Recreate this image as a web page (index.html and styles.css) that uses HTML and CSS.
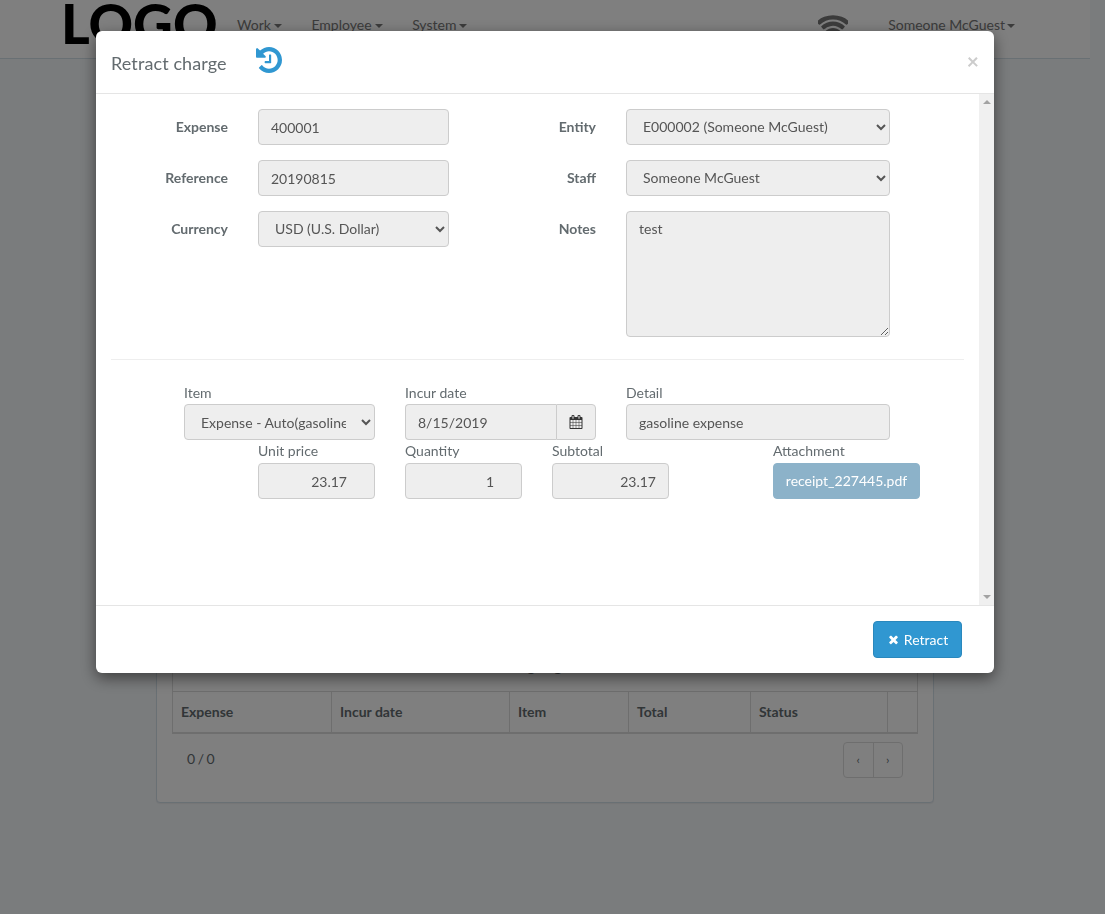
FILE: index.html
```html
<!DOCTYPE html>
<html lang="en">
<head>
  <meta charset="UTF-8"/>
  <title>Retract charge</title>
  <link rel="stylesheet" href="styles.css">
</head>
<body>
<header class="navbar">
  <div class="logo">LOGO</div>
  <nav class="nav-links">
    <a>Work<span class="caret"></span></a>
    <a>Employee<span class="caret"></span></a>
    <a>System<span class="caret"></span></a>
  </nav>
  <div class="nav-right">
    <svg class="wifi-icon" viewBox="0 0 1792 1792"><path d="M896 1523q-20 0-93-73.5t-73-93.5q0-32 62.5-54t103.5-22 103.5 22 62.5 54q0 20-73 93.5t-93 73.5zm270-271q-2 0-40-25t-101.5-50-128.5-25-128.5 25-101 50-40.5 25q-18 0-93.5-75t-75.5-93q0-13 10-23 78-77 196-121t233-44 233 44 196 121q10 10 10 23 0 18-75.5 93t-93.5 75zm273-272q-11 0-23-8-136-105-252-154.5t-268-49.5q-85 0-170.5 22t-149 53-113.5 62-79 53-31 22q-17 0-92-75t-75-93q0-12 10-22 132-132 320-205t380-73 380 73 320 205q10 10 10 22 0 18-75 93t-92 75zm271-271q-11 0-22-9-179-157-371.5-236.5t-420.5-79.5-420.5 79.5-371.5 236.5q-11 9-22 9-17 0-92.5-75t-75.5-93q0-13 10-23 187-186 445-288t527-102 527 102 445 288q10 10 10 23 0 18-75.5 93t-92.5 75z"/></svg>
    <a>Someone McGuest<span class="caret"></span></a>
  </div>
</header>

<main>
  <section class="panel">
    <div class="table-title">Ongoing</div>
    <table class="charge-table">
      <thead>
        <tr>
          <th class="col-expense">Expense</th>
          <th class="col-date">Incur date</th>
          <th class="col-item">Item</th>
          <th class="col-total">Total</th>
          <th class="col-status">Status</th>
          <th></th>
        </tr>
      </thead>
    </table>
    <div class="table-footer">
      <span class="page-count">0 / 0</span>
      <div class="pager">
        <span>‹</span>
        <span>›</span>
      </div>
    </div>
  </section>
</main>

<!-- Retract charge dialog -->
<div class="modal-overlay">
  <div class="modal">
    <div class="modal-header">
      <h4>Retract charge</h4>
      <svg class="history-icon" viewBox="128 128 1536 1536"><path d="M1664 896q0 156-61 298t-164 245-245 164-298 61q-172 0-327-72.5t-264-204.5q-7-10-6.5-22.5t8.5-20.5l137-138q10-9 25-9 16 2 23 12 73 95 179 147t225 52q104 0 198.5-40.5t163.5-109.5 109.5-163.5 40.5-198.5-40.5-198.5-109.5-163.5-163.5-109.5-198.5-40.5q-98 0-188 35.5t-160 101.5l137 138q31 30 14 69-17 40-59 40h-448q-26 0-45-19t-19-45v-448q0-42 40-59 39-17 69 14l130 129q107-101 244.5-156.5t284.5-55.5q156 0 298 61t245 164 164 245 61 298zm-640-288v448q0 14-9 23t-23 9h-320q-14 0-23-9t-9-23v-64q0-14 9-23t23-9h224v-352q0-14 9-23t23-9h64q14 0 23 9t9 23z"/></svg>
      <button class="modal-close">×</button>
    </div>

    <div class="modal-middle">
      <div class="modal-body">
        <div class="form-top">
          <div class="form-col form-col-left">
            <div class="form-row">
              <label>Expense</label>
              <input class="form-control" value="400001" disabled>
            </div>
            <div class="form-row">
              <label>Reference</label>
              <input class="form-control" value="20190815" disabled>
            </div>
            <div class="form-row">
              <label>Currency</label>
              <select class="form-control">
                <option>USD (U.S. Dollar)</option>
              </select>
            </div>
          </div>
          <div class="form-col form-col-right">
            <div class="form-row">
              <label>Entity</label>
              <select class="form-control">
                <option>E000002 (Someone McGuest)</option>
              </select>
            </div>
            <div class="form-row">
              <label>Staff</label>
              <select class="form-control">
                <option>Someone McGuest</option>
              </select>
            </div>
            <div class="form-row">
              <label>Notes</label>
              <textarea class="form-control notes" disabled>test</textarea>
            </div>
          </div>
        </div>

        <hr>

        <div class="line-row line-row-first">
          <div class="field field-wide">
            <label>Item</label>
            <select class="form-control">
              <option>Expense - Auto(gasoline)</option>
            </select>
          </div>
          <div class="field field-wide">
            <label>Incur date</label>
            <div class="input-group">
              <input class="form-control" value="8/15/2019" disabled>
              <span class="input-addon">
                <svg class="calendar-icon" viewBox="0 0 1792 1792"><path d="M192 1664h288v-288h-288v288zm352 0h320v-288h-320v288zm-352-352h288v-320h-288v320zm352 0h320v-320h-320v320zm-352-384h288v-288h-288v288zm736 736h320v-288h-320v288zm-384-736h320v-288h-320v288zm768 736h288v-288h-288v288zm-384-352h320v-320h-320v320zm-352-864v-288q0-13-9.5-22.5t-22.5-9.5h-64q-13 0-22.5 9.5t-9.5 22.5v288q0 13 9.5 22.5t22.5 9.5h64q13 0 22.5-9.5t9.5-22.5zm736 864h288v-320h-288v320zm-384-384h320v-288h-320v288zm384 0h288v-288h-288v288zm32-480v-288q0-13-9.5-22.5t-22.5-9.5h-64q-13 0-22.5 9.5t-9.5 22.5v288q0 13 9.5 22.5t22.5 9.5h64q13 0 22.5-9.5t9.5-22.5zm384-64v1280q0 52-38 90t-90 38h-1408q-52 0-90-38t-38-90v-1280q0-52 38-90t90-38h128v-96q0-66 47-113t113-47h64q66 0 113 47t47 113v96h384v-96q0-66 47-113t113-47h64q66 0 113 47t47 113v96h128q52 0 90 38t38 90z"/></svg>
              </span>
            </div>
          </div>
          <div class="field field-detail">
            <label>Detail</label>
            <input class="form-control" value="gasoline expense" disabled>
          </div>
        </div>

        <div class="line-row line-row-second">
          <div class="field field-num">
            <label>Unit price</label>
            <input class="form-control num num-spin" value="23.17" disabled>
          </div>
          <div class="field field-num">
            <label>Quantity</label>
            <input class="form-control num num-spin" value="1" disabled>
          </div>
          <div class="field field-num">
            <label>Subtotal</label>
            <input class="form-control num" value="23.17" disabled>
          </div>
          <div class="field field-attach">
            <label>Attachment</label>
            <a class="attach-btn">receipt_227445.pdf</a>
          </div>
        </div>
      </div>

      <!-- scrollbar with nothing to scroll -->
      <div class="scroll-track">
        <span class="arrow-up"></span>
        <span class="arrow-down"></span>
      </div>
    </div>

    <div class="modal-footer">
      <button class="btn-retract">
        <svg class="times-icon" viewBox="0 0 1792 1792"><path d="M1490 1322q0 40-28 68l-136 136q-28 28-68 28t-68-28l-294-294-294 294q-28 28-68 28t-68-28l-136-136q-28-28-28-68t28-68l294-294-294-294q-28-28-28-68t28-68l136-136q28-28 68-28t68 28l294 294 294-294q28-28 68-28t68 28l136 136q28 28 28 68t-28 68l-294 294 294 294q28 28 28 68z"/></svg>
        Retract
      </button>
    </div>
  </div>
</div>
</body>
</html>
```

FILE: styles.css
```css
* {
  box-sizing: border-box;
}
html, body {
  height: 100%;
}
body {
  margin: 0;
  padding-right: 15px;
  overflow: hidden;
  font-family: Lato, "Open Sans", sans-serif;
  font-size: 14px;
  line-height: 20px;
  color: #636b6f;
  background-color: #f5f8fa;
}

/* page under the dialog */
.navbar {
  display: flex;
  align-items: center;
  height: 59px;
  padding: 0 75px 0 65px;
  background-color: #fff;
  border-bottom: 1px solid #d3e0e9;
  overflow: hidden;
  color: #777;
}
.logo {
  width: 172px;
  margin: -12px 0 0 -4px;
  font-size: 55px;
  line-height: 58px;
  font-weight: 900;
  color: #000;
}
.nav-links {
  display: flex;
  gap: 29.6px;
  margin: -9px 0 0 4px;
}
.caret {
  display: inline-block;
  margin-left: 3px;
  vertical-align: middle;
  border-top: 4px solid;
  border-left: 4px solid transparent;
  border-right: 4px solid transparent;
}
.nav-right {
  display: flex;
  align-items: center;
  gap: 40px;
  margin-left: auto;
  margin-top: -9px;
}
.nav-right .caret {
  margin-left: 2px;
}
.wifi-icon {
  width: 30px;
  height: 30px;
  margin-top: 6px;
  fill: #777;
}

.panel {
  width: 778px;
  height: 174px;
  margin: 570px 0 0 156px;
  padding: 15px;
  background-color: #fff;
  border: 1px solid #d3e0e9;
  border-radius: 4px;
  box-shadow: 0 1px 1px rgba(0,0,0,0.05);
}
.table-title {
  height: 46px;
  padding: 11px 20px 0 0;
  text-align: center;
  font-weight: bold;
  border: 1px solid #ddd;
  border-bottom: none;
}
.charge-table {
  width: 746px;
  border-collapse: collapse;
  table-layout: fixed;
}
.charge-table th {
  height: 41px;
  padding: 0 8px;
  text-align: left;
  border: 1px solid #ddd;
  border-bottom-width: 2px;
}
.col-expense { width: 159px; }
.col-date { width: 178px; }
.col-item { width: 119px; }
.col-total { width: 122px; }
.col-status { width: 137px; }
.table-footer {
  display: flex;
  justify-content: space-between;
  padding: 8px 15px 0;
}
.page-count {
  margin-top: 7px;
  word-spacing: -1px;
}
.pager {
  display: flex;
  width: 60px;
  height: 36px;
  border: 1px solid #ddd;
  border-radius: 4px;
}
.pager span {
  flex: 1;
  text-align: center;
  line-height: 34px;
  font-size: 12px;
}
.pager span + span {
  border-left: 1px solid #ddd;
}

/* dialog */
.modal-overlay {
  position: fixed;
  top: 0; left: 0; right: 0; bottom: 0;
  background-color: rgba(0,0,0,0.5);
}
.modal {
  width: 898px;
  margin: 31px 0 0 96px;
  background-color: #fff;
  border-radius: 6px;
  box-shadow: 0 5px 15px rgba(0,0,0,0.5);
}
.modal-header {
  display: flex;
  align-items: center;
  height: 63px;
  padding: 0 15px;
  border-bottom: 1px solid #e5e5e5;
}
.modal-header h4 {
  margin: 2px 0 0;
  font-size: 18px;
  font-weight: normal;
  letter-spacing: 0.1px;
}
.history-icon {
  width: 26px;
  height: 26px;
  margin: -5px 0 0 29.5px;
  fill: #3097d1;
}
.modal-close {
  margin: -4px 0 0 auto;
  padding: 0;
  background: none;
  border: none;
  font-family: inherit;
  font-size: 21px;
  font-weight: bold;
  color: #ccc;
}
.modal-middle {
  display: flex;
  height: 511px;
}
.modal-body {
  flex: 1;
  padding: 15px;
}
.scroll-track {
  display: flex;
  flex: none;
  flex-direction: column;
  justify-content: space-between;
  align-items: center;
  width: 15px;
  padding: 6px 0;
  background-color: #f0f0f0;
}
.arrow-up {
  border-bottom: 4px solid #a3a3a3;
  border-left: 4px solid transparent;
  border-right: 4px solid transparent;
}
.arrow-down {
  border-top: 4px solid #a3a3a3;
  border-left: 4px solid transparent;
  border-right: 4px solid transparent;
}
.modal-footer {
  display: flex;
  justify-content: flex-end;
  height: 68px;
  padding: 15px 32px 15px 0;
  border-top: 1px solid #e5e5e5;
}

.form-top {
  display: flex;
  gap: 30px;
}
.form-col label {
  width: 117px;
  flex: none;
  padding-top: 8px;
  text-align: right;
  font-weight: bold;
}
.form-col-left .form-control {
  width: 191px;
}
.form-col-right .form-control {
  width: 264px;
}
.form-col-left {
  width: 338px;
}
.form-row {
  display: flex;
  gap: 30px;
  margin-bottom: 15px;
}
.form-control {
  display: block;
  height: 36px;
  padding: 6px 12px;
  font-family: inherit;
  font-size: 14px;
  line-height: 20px;
  color: #555;
  background-color: #eee;
  border: 1px solid #ccc;
  border-radius: 4px;
  opacity: 1;
}
select.form-control {
  padding: 4px 12px 6px;
}
.field select.form-control {
  padding: 6px 12px;
}
.notes {
  height: 126px;
  padding-top: 7px;
}
hr {
  margin: 7px 0 0;
  border: none;
  border-top: 1px solid #eee;
}

.line-row {
  display: flex;
  gap: 30px;
}
.line-row-first {
  padding: 23px 0 0 73px;
}
.line-row-second {
  padding: 1px 0 0 147px;
}
.field label {
  display: block;
  margin-bottom: 1px;
}
.field .form-control {
  width: 100%;
}
.field-wide {
  width: 191px;
}
.field-detail {
  width: 264px;
}
.field-num {
  width: 117px;
}
.field-attach {
  width: 147px;
  margin-left: 74px;
}
.line-row-second label {
  margin-bottom: 2px;
}
.num {
  text-align: right;
}
.num-spin {
  padding-right: 27px;
}
.input-group {
  display: flex;
}
.input-group .form-control {
  border-radius: 4px 0 0 4px;
  border-right: none;
}
.input-addon {
  display: flex;
  flex: none;
  align-items: center;
  justify-content: center;
  width: 40px;
  height: 36px;
  background-color: #eee;
  border: 1px solid #ccc;
  border-radius: 0 4px 4px 0;
}
.calendar-icon {
  width: 14px;
  height: 14px;
  fill: #333;
}
.attach-btn {
  display: block;
  height: 36px;
  line-height: 34px;
  text-align: center;
  color: #fff;
  background-color: #8cb2c9;
  border: 1px solid #8cb2c9;
  border-radius: 4px;
}
.btn-retract {
  display: flex;
  align-items: center;
  justify-content: center;
  gap: 4px;
  width: 89px;
  height: 37px;
  padding: 0;
  font-family: inherit;
  font-size: 14px;
  color: #fff;
  background-color: #3097d1;
  border: 1px solid #2a88bd;
  border-radius: 4px;
}
.times-icon {
  width: 13px;
  height: 13px;
  fill: #fff;
}
```
